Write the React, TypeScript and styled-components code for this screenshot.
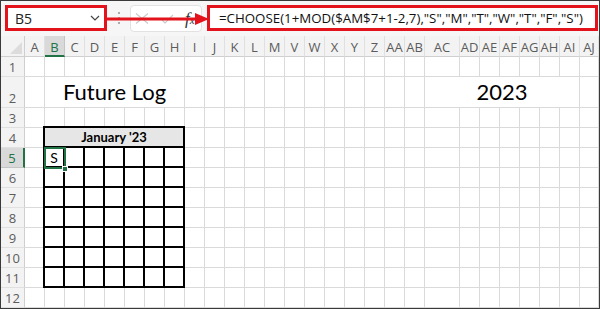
import React from 'react';
import styled, { createGlobalStyle } from 'styled-components';

const RED = '#e3121b';
const GREEN = '#217346';
const GRID = '#dadada';
const HEAD_LINE = '#cfcfcf';

const GlobalStyle = createGlobalStyle`
  html, body { margin: 0; padding: 0; background: #fff; }
  body { font-family: "Open Sans", "Noto Sans", sans-serif; }
  *, *::before, *::after { box-sizing: border-box; }
`;

const Frame = styled.div`
  width: 600px;
  height: 309px;
  border: 1px solid #3a3a3a;
  overflow: hidden;
  display: flex;
  flex-direction: column;
  background: #fff;
`;

const TopBar = styled.div`
  position: relative;
  flex: none;
  height: 35px;
  display: flex;
  align-items: flex-start;
  padding: 4px 1px 0 4px;
  background: #f6f6f6;
`;

const NameBox = styled.div`
  width: 102px;
  height: 26px;
  border: 3px solid ${RED};
  background: #fff;
  display: flex;
  align-items: center;
  justify-content: space-between;
  padding: 0 4px 0 7px;
  font-size: 14px;
  color: #222;
`;

const Dots = styled.div`
  width: 23px;
  height: 26px;
  display: flex;
  align-items: center;
  justify-content: center;
`;

const FuncBox = styled.div`
  width: 72px;
  height: 27px;
  border: 1px solid #e2e2e2;
  border-radius: 4px;
  background: #fff;
  display: flex;
  align-items: center;
  padding: 0 0 0 4px;
  gap: 11px;
`;

const Fx = styled.span`
  font-family: "Liberation Serif", "DejaVu Serif", serif;
  font-style: italic;
  font-size: 17px;
  color: #333;
  line-height: 1;
  & > small { font-size: 11px; }
`;

const FormulaBox = styled.div`
  flex: 1;
  margin-left: 5px;
  height: 26px;
  border: 3px solid ${RED};
  background: #fff;
  display: flex;
  align-items: center;
  padding-left: 9px;
  font-size: 13.3px;
  color: #111;
  white-space: nowrap;
  overflow: hidden;
`;

const Arrow = styled.svg`
  position: absolute;
  left: 105px;
  top: 12px;
  overflow: visible;
`;

const Sheet = styled.div<{ $cols: string }>`
  flex: 1;
  display: grid;
  grid-template-columns: ${(p) => p.$cols};
  grid-template-rows: 21px 20px 31px repeat(10, 20px);
`;

const Corner = styled.div`
  position: relative;
  background: #f3f3f3;
  border-right: 1px solid ${HEAD_LINE};
  border-bottom: 1px solid ${HEAD_LINE};
  &::after {
    content: '';
    position: absolute;
    right: 2px;
    bottom: 2px;
    width: 0;
    height: 0;
    border-left: 12px solid transparent;
    border-bottom: 12px solid #dcdcdc;
  }
`;

const ColHead = styled.div<{ $active?: boolean }>`
  background: ${(p) => (p.$active ? '#d9d9d9' : '#f3f3f3')};
  border-right: 1px solid ${(p) => (p.$active ? '#c4c4c4' : '#e0e0e0')};
  border-bottom: ${(p) => (p.$active ? `2px solid ${GREEN}` : `1px solid ${HEAD_LINE}`)};
  color: ${(p) => (p.$active ? GREEN : '#5c5c5c')};
  font-size: 13px;
  display: flex;
  align-items: center;
  justify-content: center;
  padding-top: 2px;
  white-space: nowrap;
  overflow: hidden;
`;

const RowHead = styled.div<{ $active?: boolean }>`
  background: ${(p) => (p.$active ? '#d9d9d9' : '#f3f3f3')};
  border-right: ${(p) => (p.$active ? `2px solid ${GREEN}` : `1px solid ${HEAD_LINE}`)};
  border-bottom: 1px solid ${(p) => (p.$active ? '#c4c4c4' : '#e0e0e0')};
  color: ${(p) => (p.$active ? GREEN : '#5c5c5c')};
  font-size: 13px;
  line-height: 16px;
  display: flex;
  align-items: flex-end;
  justify-content: center;
  padding-bottom: 1px;
`;

const Cell = styled.div`
  border-right: 1px solid ${GRID};
  border-bottom: 1px solid ${GRID};
  background: #fff;
`;

const Title = styled.div<{ $col: number; $row: number; $span: number }>`
  grid-column: ${(p) => p.$col} / span ${(p) => p.$span};
  grid-row: ${(p) => p.$row};
  border-right: 1px solid ${GRID};
  border-bottom: 1px solid ${GRID};
  display: flex;
  align-items: flex-end;
  justify-content: center;
  padding-bottom: 2px;
  font-family: "Lato", "Carlito", "Liberation Sans", sans-serif;
  font-size: 22px;
  line-height: 26px;
  color: #000;
`;

const Calendar = styled.div<{ $col: number; $row: number }>`
  grid-column: ${(p) => p.$col} / span 7;
  grid-row: ${(p) => p.$row} / span 8;
  margin: -2px 0 0 -2px;
  position: relative;
  z-index: 1;
  background: #000;
  padding: 2px;
  display: grid;
  grid-template-columns: repeat(7, 18px);
  grid-template-rows: repeat(8, 18px);
  gap: 2px;
`;

const CalHead = styled.div`
  grid-column: 1 / span 7;
  background: #e7e6e6;
  display: flex;
  align-items: center;
  justify-content: center;
  font-family: "Lato", "Carlito", "Liberation Sans", sans-serif;
  font-weight: 700;
  font-size: 13px;
  color: #000;
`;

const Day = styled.div`
  position: relative;
  background: #fff;
  display: flex;
  align-items: center;
  justify-content: center;
  font-family: "Lato", "Carlito", "Liberation Sans", sans-serif;
  font-size: 14px;
  color: #000;
`;

const Selection = styled.div`
  position: absolute;
  z-index: 2;
  left: -1px;
  top: -1px;
  width: 22px;
  height: 22px;
  border: 2px solid ${GREEN};
  pointer-events: none;
`;

const Handle = styled.div`
  position: absolute;
  left: 16px;
  top: 17px;
  width: 6px;
  height: 6px;
  background: ${GREEN};
  border: 1px solid #fff;
`;

type Col = { l: string; w: number };
const COLS: Col[] = [
  ...'ABCDEFGHIJKLM'.split('').map((l) => ({ l, w: 20 })),
  ...['V', 'W', 'X', 'Y', 'Z', 'AA', 'AB'].map((l) => ({ l, w: 20 })),
  { l: 'AC', w: 35 },
  ...['AD', 'AE', 'AF', 'AG', 'AH', 'AI'].map((l) => ({ l, w: 20 })),
  { l: 'AJ', w: 19 },
];

type Merge = { r: number; c: number; rs: number; cs: number; kind: 'title' | 'cal'; text?: string };
const MERGES: Merge[] = [
  { r: 2, c: 1, rs: 1, cs: 7, kind: 'title', text: 'Future Log' },
  { r: 2, c: 20, rs: 1, cs: 7, kind: 'title', text: '2023' },
  { r: 4, c: 1, rs: 8, cs: 7, kind: 'cal' },
];

const FORMULA = '=CHOOSE(1+MOD($AM$7+1-2,7),"S","M","T","W","T","F","S")';

export default function App() {
  const cols = `24px ${COLS.map((c) => `${c.w}px`).join(' ')}`;
  const items: React.ReactNode[] = [];

  items.push(<Corner key="corner" />);
  COLS.forEach((c, i) => items.push(<ColHead key={`h${i}`} $active={i === 1}>{c.l}</ColHead>));

  for (let r = 1; r <= 12; r++) {
    items.push(<RowHead key={`r${r}`} $active={r === 5}>{r}</RowHead>);
    for (let ci = 0; ci < COLS.length; ci++) {
      const m = MERGES.find((m) => r >= m.r && r < m.r + m.rs && ci >= m.c && ci < m.c + m.cs);
      if (m) {
        if (m.r === r && m.c === ci) {
          if (m.kind === 'title') {
            items.push(
              <Title key={`t${r}-${ci}`} $col={ci + 2} $row={r + 1} $span={m.cs}>
                {m.text}
              </Title>
            );
          } else {
            const days: React.ReactNode[] = [];
            for (let d = 0; d < 49; d++) {
              days.push(
                <Day key={d}>
                  {d === 0 && (
                    <>
                      S
                      <Selection>
                        <Handle />
                      </Selection>
                    </>
                  )}
                </Day>
              );
            }
            items.push(
              <Calendar key="cal" $col={ci + 2} $row={r + 1}>
                <CalHead>January '23</CalHead>
                {days}
              </Calendar>
            );
          }
        }
        continue;
      }
      items.push(<Cell key={`c${r}-${ci}`} />);
    }
  }

  return (
    <>
      <GlobalStyle />
      <Frame>
        <TopBar>
          <NameBox>
            <span>B5</span>
            <svg width="10" height="6" viewBox="0 0 10 6">
              <path d="M1 1 L5 5 L9 1" fill="none" stroke="#444" strokeWidth="1.2" />
            </svg>
          </NameBox>
          <Dots>
            <svg width="4" height="14" viewBox="0 0 4 14">
              <circle cx="2" cy="2" r="1.1" fill="#9a9a9a" />
              <circle cx="2" cy="7" r="1.1" fill="#9a9a9a" />
              <circle cx="2" cy="12" r="1.1" fill="#9a9a9a" />
            </svg>
          </Dots>
          <FuncBox>
            <svg width="14" height="11" viewBox="0 0 14 11">
              <path d="M1 0.5 L13 10.5 M13 0.5 L1 10.5" stroke="#c9c9c9" strokeWidth="1.1" fill="none" />
            </svg>
            <svg width="14" height="10" viewBox="0 0 14 10">
              <path d="M1 5 L5 9 L13 1" stroke="#c9c9c9" strokeWidth="1.1" fill="none" />
            </svg>
            <Fx>
              f<small>x</small>
            </Fx>
          </FuncBox>
          <FormulaBox>{FORMULA}</FormulaBox>
          <Arrow width="104" height="12" viewBox="0 0 104 12">
            <rect x="0" y="4.5" width="92" height="3" fill={RED} />
            <polygon points="89,0 103,6 89,12" fill={RED} />
          </Arrow>
        </TopBar>
        <Sheet $cols={cols}>{items}</Sheet>
      </Frame>
    </>
  );
}
